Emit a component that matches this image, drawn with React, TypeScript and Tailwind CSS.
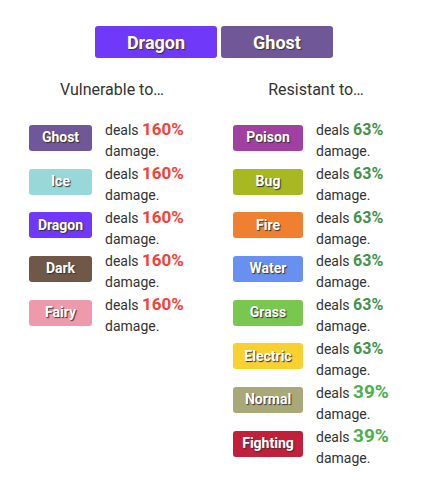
const typeColors: Record<string, string> = {
  Ghost: "bg-[#705898]",
  Ice: "bg-[#98d8d8]",
  Dragon: "bg-[#7038f8]",
  Dark: "bg-[#705848]",
  Fairy: "bg-[#ee99ac]",
  Poison: "bg-[#a040a0]",
  Bug: "bg-[#a8b820]",
  Fire: "bg-[#f08030]",
  Water: "bg-[#6890f0]",
  Grass: "bg-[#78c850]",
  Electric: "bg-[#f8d030]",
  Normal: "bg-[#a8a878]",
  Fighting: "bg-[#c11f3a]",
};

interface Matchup {
  type: string;
  value: string;
}

const vulnerable: Matchup[] = [
  { type: "Ghost", value: "160%" },
  { type: "Ice", value: "160%" },
  { type: "Dragon", value: "160%" },
  { type: "Dark", value: "160%" },
  { type: "Fairy", value: "160%" },
];

const resistant: Matchup[] = [
  { type: "Poison", value: "63%" },
  { type: "Bug", value: "63%" },
  { type: "Fire", value: "63%" },
  { type: "Water", value: "63%" },
  { type: "Grass", value: "63%" },
  { type: "Electric", value: "63%" },
  { type: "Normal", value: "39%" },
  { type: "Fighting", value: "39%" },
];

const valueColor = (value: string) => {
  if (value === "160%") return "text-[#f44336] text-[17px]";
  if (value === "39%") return "text-[#4caf50] text-[19px]";
  return "text-[#43934b] text-[16px]";
};

const Badge = ({ type, width }: { type: string; width: string }) => (
  <div
    className={`${typeColors[type]} ${width} h-[26px] shrink-0 rounded-[3px] flex items-center justify-center text-white font-bold text-[14px] [text-shadow:1px_1px_1px_#333]`}
  >
    {type}
  </div>
);

const Column = ({
  title,
  items,
  badgeWidth,
}: {
  title: string;
  items: Matchup[];
  badgeWidth: string;
}) => (
  <div className="flex flex-col">
    <div className="text-center text-[16px] text-[#333] leading-[20px] mb-[17px]">{title}</div>
    <div className="flex flex-col gap-[2px] pl-[19px]">
      {items.map((item) => (
        <div key={item.type} className="flex items-center gap-[13px] h-[41.7px]">
          <Badge type={item.type} width={badgeWidth} />
          <div className="text-[14px] text-[#333] leading-[21px] pt-[6px]">
            <div>
              deals <span className={`font-bold ${valueColor(item.value)}`}>{item.value}</span>
            </div>
            <div>damage.</div>
          </div>
        </div>
      ))}
    </div>
  </div>
);

export default function App() {
  return (
    <div className="w-[428px] min-h-[484px] bg-white font-['Roboto',sans-serif]">
      <div className="flex justify-center gap-1 pt-[26px]">
        <div className="w-[122px] h-[32px] rounded-[3px] bg-[#7038f8] flex items-center justify-center text-white font-bold text-[18px] [text-shadow:1px_1px_1px_#333]">
          Dragon
        </div>
        <div className="w-[112px] h-[32px] rounded-[3px] bg-[#705898] flex items-center justify-center text-white font-bold text-[18px] [text-shadow:1px_1px_1px_#333]">
          Ghost
        </div>
      </div>
      <div className="grid grid-cols-2 px-[10px] mt-[22px]">
        <Column title="Vulnerable to…" items={vulnerable} badgeWidth="w-[63px]" />
        <Column title="Resistant to…" items={resistant} badgeWidth="w-[70px]" />
      </div>
    </div>
  );
}
